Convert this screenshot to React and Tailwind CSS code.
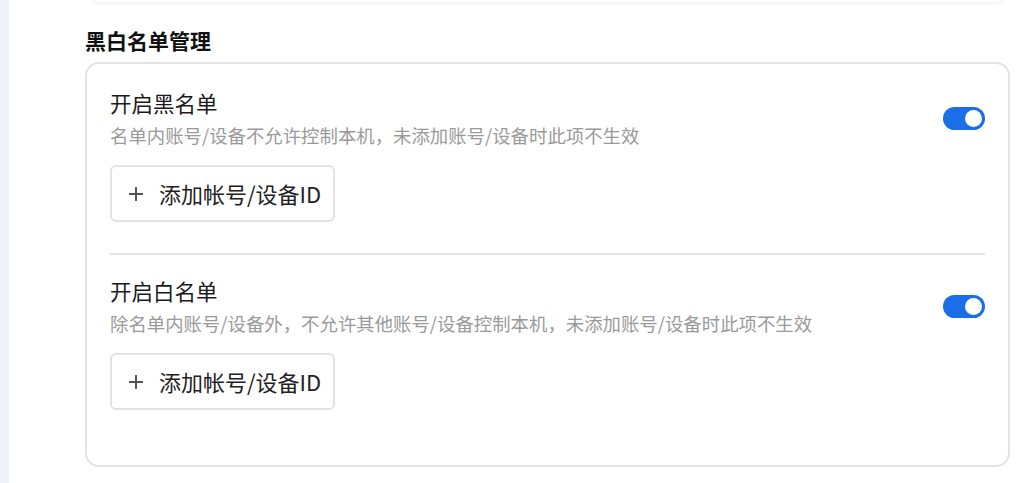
const font = { fontFamily: '"Noto Sans CJK SC", "Noto Sans", sans-serif' };

const Toggle = () => (
  <div className="flex h-[23px] w-[42px] shrink-0 items-center justify-end rounded-full bg-[#1b6ee8] px-[3px]">
    <div className="h-[17px] w-[17px] rounded-full bg-white" />
  </div>
);

const AddButton = () => (
  <button className="flex h-[57px] items-center gap-[15px] rounded-[6px] border-2 border-[#e2e2e2] bg-white pl-[16px] pr-[12px] text-[22px] text-[#222]">
    <svg width="16" height="16" viewBox="0 0 16 16" className="text-[#555]">
      <path d="M8 1v14M1 8h14" stroke="currentColor" strokeWidth="2" />
    </svg>
    <span>添加帐号/设备ID</span>
  </button>
);

const ListSection = ({ title, desc }) => (
  <div className="flex flex-col">
    <div className="flex items-center justify-between">
      <div>
        <div className="text-[21.5px] leading-[30px] text-[#1a1a1a]">{title}</div>
        <div className="mt-[4px] text-[18.4px] leading-[26px] text-[#9a9a9a]">{desc}</div>
      </div>
      <Toggle />
    </div>
    <div className="mt-[17px]">
      <AddButton />
    </div>
  </div>
);

export default function App() {
  return (
    <div className="flex h-[483px] w-[1032px] overflow-hidden bg-white" style={font}>
      <div className="w-[9px] shrink-0 bg-[#f0f3f9]" />
      <div className="flex flex-1 flex-col pl-[76px] pr-[22px]">
        <div className="-mt-[20px] mr-[3px] ml-[3px] h-[22px] shrink-0 rounded-b-[12px] bg-white shadow-[0_2px_4px_rgba(0,0,0,0.06)]" />
        <h2 className="mt-[23px] text-[21px] font-bold leading-[30px] text-[#111]">黑白名单管理</h2>
        <div className="mt-[7px] flex flex-col rounded-[14px] border-2 border-[#e3e3e3] bg-white px-[23px] pt-[24px] pb-[55px]">
          <ListSection
            title="开启黑名单"
            desc="名单内账号/设备不允许控制本机，未添加账号/设备时此项不生效"
          />
          <div className="mt-[31px] mb-[21px] h-[2px] bg-[#e4e4e4]" />
          <ListSection
            title="开启白名单"
            desc="除名单内账号/设备外，不允许其他账号/设备控制本机，未添加账号/设备时此项不生效"
          />
        </div>
      </div>
    </div>
  );
}
